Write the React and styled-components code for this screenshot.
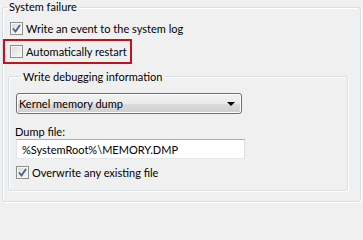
import React from "react";
import styled, { createGlobalStyle } from "styled-components";

const GlobalStyle = createGlobalStyle`
  html, body {
    margin: 0;
    padding: 0;
    background: #f0f0f0;
  }
  body {
    font-family: Lato, "Noto Sans", sans-serif;
    font-size: 11px;
    color: #000;
  }
`;

const Page = styled.div`
  width: 363px;
  height: 205px;
  padding: 0 2px;
  box-sizing: border-box;
  background: #f0f0f0;
  overflow: hidden;
`;

const Group = styled.fieldset`
  margin: 0;
  min-width: 0;
  padding: ${(p) => p.$pad};
  border: 1px solid #d5dfe5;
  border-radius: 3px;
  box-shadow: inset 1px 1px 0 #fff, 1px 1px 0 #fff;
  height: ${(p) => p.$height};
  width: ${(p) => p.$width || "auto"};
  box-sizing: border-box;
`;

const Legend = styled.legend`
  padding: 0 2px;
  margin-left: ${(p) => p.$indent || "4px"};
  line-height: ${(p) => p.$h || "14px"};
  height: ${(p) => p.$h || "14px"};
`;

const Row = styled.label`
  display: flex;
  align-items: center;
  gap: 3px;
  height: 17px;
  width: fit-content;
  padding: ${(p) => (p.$focused ? "2px 3px 2px 5px" : `0 0 0 ${p.$indent || "7px"}`)};
  border: ${(p) => (p.$focused ? "2px solid #c0141c" : "none")};
  white-space: nowrap;
`;

const Box = styled.span`
  width: 11px;
  height: 11px;
  border: 1px solid #8e8f8f;
  background: linear-gradient(135deg, #d9d9d9, #fbfbfb);
  box-shadow: inset 0 0 0 1px #f6f6f6;
  display: flex;
  align-items: center;
  justify-content: center;
  flex: none;
`;

const Check = () => (
  <svg width="9" height="9" viewBox="0 0 9 9">
    <path d="M1 4.5 L3.5 7.5 L8 1" fill="none" stroke="#4a5f97" strokeWidth="1.8" />
  </svg>
);

const Checkbox = ({ checked, children, focused, indent }) => (
  <Row $focused={focused} $indent={indent}>
    <Box>{checked && <Check />}</Box>
    <span>{children}</span>
  </Row>
);

const Stack = styled.div`
  display: flex;
  flex-direction: column;
  gap: ${(p) => p.$gap || "0"};
  margin-top: ${(p) => p.$top || "0"};
`;

const Select = styled.div`
  width: 226px;
  height: 21px;
  box-sizing: border-box;
  border: 1px solid #707070;
  border-radius: 3px;
  background: linear-gradient(#f2f2f2 0%, #ebebeb 50%, #dddddd 50%, #cfcfcf 100%);
  box-shadow: inset 0 0 0 1px #fcfcfc;
  display: flex;
  align-items: center;
  justify-content: space-between;
  padding: 0 6px 0 2px;
`;

const Arrow = styled.span`
  width: 0;
  height: 0;
  border-left: 4px solid transparent;
  border-right: 4px solid transparent;
  border-top: 4px solid #000;
`;

const Label = styled.div`
  line-height: 14px;
  height: 14px;
  margin-left: -1px;
`;

const Input = styled.div`
  width: 229px;
  height: 20px;
  box-sizing: border-box;
  background: #fff;
  border: 1px solid #e3e9ef;
  border-top-color: #abadb3;
  border-left-color: #e2e3ea;
  border-right-color: #dbdfe6;
  padding: 0 5px;
  display: flex;
  align-items: center;
`;

export default function App() {
  return (
    <Page>
      <GlobalStyle />
      <Group $pad="6px 0 0 0" $height="202px">
        <Legend>System failure</Legend>
        <Stack $gap="2px">
          <Checkbox checked>Write an event to the system log</Checkbox>
          <Checkbox focused>Automatically restart</Checkbox>
        </Stack>
        <Group
          $pad="10px 7px 0 7px"
          $height="121px"
          $width="340px"
          style={{ marginLeft: 5, marginTop: 6 }}
        >
          <Legend $indent="5px" $h="13px">Write debugging information</Legend>
          <Select>
            <span>Kernel memory dump</span>
            <Arrow />
          </Select>
          <Stack $top="11px">
            <Label>Dump file:</Label>
            <Input>%SystemRoot%\MEMORY.DMP</Input>
          </Stack>
          <Stack $top="5px">
            <Checkbox checked indent="0">Overwrite any existing file</Checkbox>
          </Stack>
        </Group>
      </Group>
    </Page>
  );
}
